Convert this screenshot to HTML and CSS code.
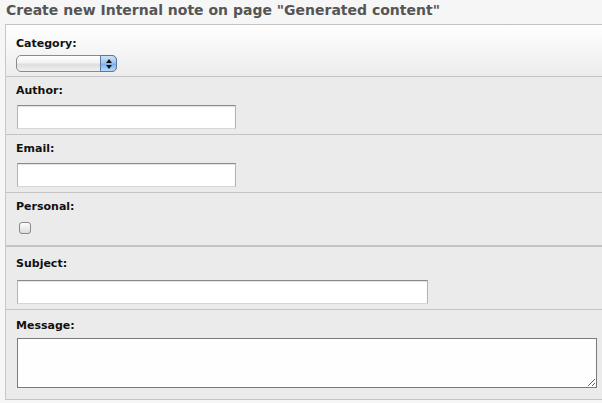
FILE: index.html
```html
<!DOCTYPE html>
<html>
<head>
<meta charset="utf-8">
<link rel="stylesheet" href="styles.css">
</head>
<body>
<h1 class="title">Create new Internal note on page "Generated content"</h1>
<form class="note-form">
  <div class="row row-category">
    <label class="label">Category:</label>
    <span class="select-wrap">
      <select class="select"><option></option></select>
      <span class="select-btn"><span class="arr-up"></span><span class="arr-down"></span></span>
    </span>
  </div>
  <div class="row row-author">
    <label class="label">Author:</label>
    <input class="text short" type="text">
  </div>
  <div class="row row-email">
    <label class="label">Email:</label>
    <input class="text short" type="text">
  </div>
  <div class="row row-personal">
    <label class="label">Personal:</label>
    <input class="check" type="checkbox">
  </div>
  <div class="row row-subject">
    <label class="label">Subject:</label>
    <input class="text long" type="text">
  </div>
  <div class="row row-message">
    <label class="label">Message:</label>
    <textarea class="area"></textarea>
  </div>
</form>
</body>
</html>
```
FILE: styles.css
```css
html, body {
  margin: 0;
  padding: 0;
  background: #f6f6f6;
}
body {
  font-family: "DejaVu Sans", Verdana, sans-serif;
  width: 602px;
  height: 403px;
  overflow: hidden;
}
.title {
  margin: 0;
  padding: 1px 0 0 6px;
  height: 24px;
  box-sizing: border-box;
  font-size: 14px;
  font-weight: bold;
  color: #555;
  line-height: 18px;
  white-space: nowrap;
}
.note-form {
  margin: 0 0 0 5px;
  border-top: 1px solid #c4c4c4;
  border-left: 1px solid #c8c8c8;
  border-bottom: 1px solid #c4c4c4;
  display: flex;
  flex-direction: column;
}
.row {
  display: flex;
  flex-direction: column;
  align-items: flex-start;
  flex: none;
  box-sizing: border-box;
  padding: 0 0 0 10px;
  background: #ebebeb;
  border-bottom: 1px solid #c4c4c4;
}
.label {
  font-size: 11px;
  font-weight: bold;
  color: #111;
  line-height: 14px;
}
.row-category {
  height: 52px;
  padding-top: 12px;
  background: linear-gradient(#ffffff, #ececec);
}
.row-category .label { margin-bottom: 4px; }
.row-author, .row-email {
  height: 58px;
  padding-top: 7px;
}
.row-author .label, .row-email .label { margin-bottom: 7px; }
.row-personal {
  height: 54px;
  padding-top: 7px;
  border-bottom: 2px solid #c4c4c4;
}
.row-personal .label { margin-bottom: 8px; }
.row-subject {
  height: 63px;
  padding-top: 10px;
}
.row-subject .label { margin-bottom: 9px; }
.row-message {
  height: 89px;
  padding-top: 9px;
  border-bottom: none;
}
.row-message .label { margin-bottom: 5px; }

.text {
  margin: 0 0 0 1px;
  height: 24px;
  box-sizing: border-box;
  background: #fff;
  border: 1px solid #b4b4b4;
  border-top-color: #8a8a8a;
  border-bottom-color: #d6d6d6;
  box-shadow: inset 0 1px 1px rgba(0,0,0,0.12);
  padding: 0 3px;
  font: 11px "DejaVu Sans", sans-serif;
}
.short { width: 219px; }
.long { width: 411px; }
.area {
  display: block;
  margin: 0 0 0 1px;
  width: 580px;
  height: 50px;
  box-sizing: border-box;
  border: 1px solid #7a7a7a;
  background: #fefefe;
  resize: both;
  font: 11px "DejaVu Sans", sans-serif;
}
.check {
  appearance: none;
  -webkit-appearance: none;
  margin: 0 0 0 3px;
  width: 12px;
  height: 12px;
  border: 1px solid #8a8a8a;
  border-radius: 3px;
  background: linear-gradient(#fdfdfd, #dcdcdc);
}
.select-wrap {
  position: relative;
  display: block;
  width: 101px;
  height: 17px;
}
.select {
  appearance: none;
  -webkit-appearance: none;
  display: block;
  width: 101px;
  height: 17px;
  margin: 0;
  padding: 0;
  box-sizing: border-box;
  border: 1px solid #8a8a8a;
  border-radius: 5px;
  background: linear-gradient(#ffffff, #f2f2f2 45%, #dedede 55%, #f0f0f0);
  font: 11px "DejaVu Sans", sans-serif;
}
.select-btn {
  position: absolute;
  right: 0;
  top: 0;
  width: 17px;
  height: 17px;
  box-sizing: border-box;
  border: 1px solid #5a77a8;
  border-radius: 0 5px 5px 0;
  background: linear-gradient(#cfe3f9, #9fc4ee 45%, #7fb0ea 55%, #b7dcfb);
  display: flex;
  flex-direction: column;
  align-items: center;
  justify-content: center;
  gap: 2px;
}
.arr-up, .arr-down {
  width: 0;
  height: 0;
  border-left: 3px solid transparent;
  border-right: 3px solid transparent;
}
.arr-up { border-bottom: 4px solid #111; }
.arr-down { border-top: 4px solid #111; }
```
